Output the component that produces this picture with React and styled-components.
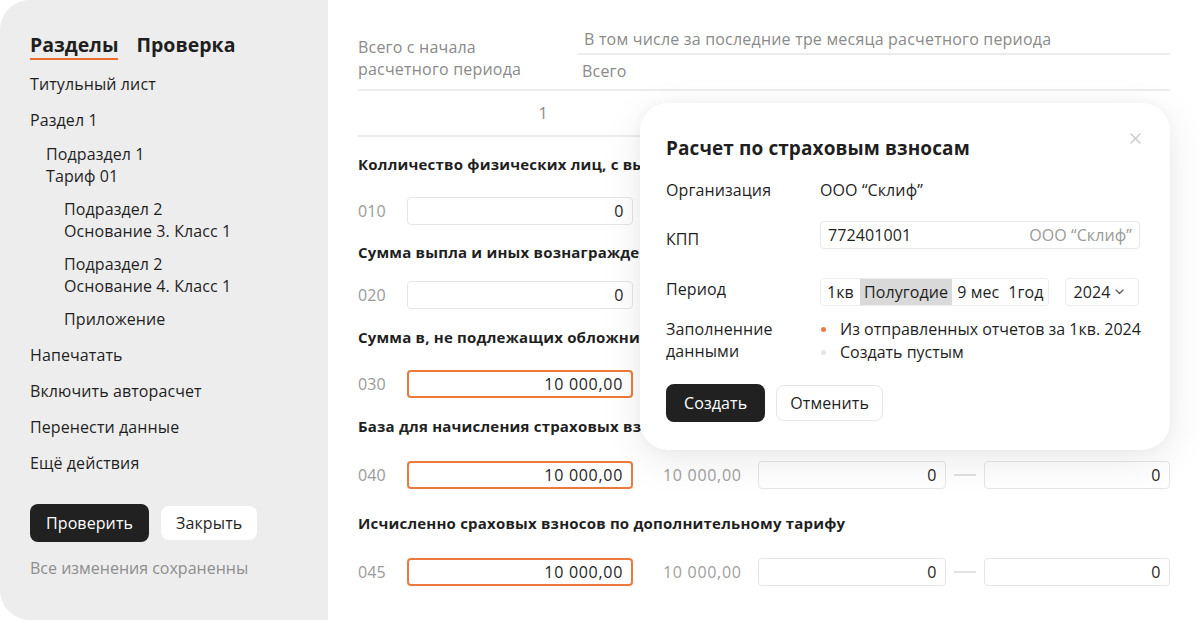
import React from 'react';
import styled, { createGlobalStyle } from 'styled-components';

const GlobalStyle = createGlobalStyle`
  html, body { margin: 0; padding: 0; background: #fff; }
  body {
    font-family: "Open Sans", "Noto Sans", sans-serif;
    color: #1f1f1f;
    letter-spacing: 0.1px;
    -webkit-font-smoothing: antialiased;
  }
  * { box-sizing: border-box; }
`;

const Page = styled.div`
  display: flex;
  width: 1200px;
  height: 620px;
  overflow: hidden;
  background: #fff;
`;

/* ---------- Sidebar ---------- */
const Sidebar = styled.aside`
  width: 328px;
  flex-shrink: 0;
  background: #ededed;
  border-radius: 30px 0 0 30px;
  padding: 33px 30px 0 30px;
  display: flex;
  flex-direction: column;
`;

const Tabs = styled.div`
  display: flex;
  gap: 18px;
`;

const Tab = styled.div`
  font-size: 19.5px;
  font-weight: 700;
  line-height: 24px;
  letter-spacing: 0;
  padding-bottom: 1px;
  border-bottom: 2px solid ${(p) => (p.$active ? '#ee6a2f' : 'transparent')};
  color: #1f1f1f;
`;

const NavList = styled.ul`
  list-style: none;
  margin: 13px 0 0;
  padding: 0;
`;

const indents = [0, 16, 34];
const gaps = [14, 12, 11];

const NavItem = styled.li`
  font-size: 16px;
  line-height: 22px;
  padding-left: ${(p) => indents[p.$level]}px;
  margin-top: ${(p) => (p.$first ? 0 : gaps[p.$level])}px;
  color: #1f1f1f;
`;

const SideActions = styled.div`
  display: flex;
  align-items: center;
  gap: 12px;
  margin-top: 30px;
`;

const DarkButton = styled.button`
  height: 38px;
  padding: 0 ${(p) => p.$px || 16}px;
  border: none;
  border-radius: 8px;
  background: #212121;
  color: #fff;
  font-family: inherit;
  font-size: 16px;
  letter-spacing: 0.1px;
`;

const LightButton = styled.button`
  height: ${(p) => (p.$bordered ? 36 : 34)}px;
  padding: 0 ${(p) => (p.$bordered ? 13 : 15)}px;
  border: ${(p) => (p.$bordered ? '1.5px solid #e6e6e6' : 'none')};
  border-radius: 8px;
  background: #fff;
  color: #1f1f1f;
  font-family: inherit;
  font-size: 16px;
  letter-spacing: 0.1px;
`;

const SavedNote = styled.div`
  margin-top: 15px;
  font-size: 16px;
  line-height: 22px;
  letter-spacing: 0;
  color: #8e8e8e;
`;

/* ---------- Main form ---------- */
const Main = styled.main`
  flex: 1;
  position: relative;
  padding: 28px 30px 0 30px;
`;

const Header = styled.div`
  display: grid;
  grid-template-columns: 220px 1fr;
  border-bottom: 2px solid #ececec;
  font-size: 16px;
  line-height: 22px;
  letter-spacing: 0.2px;
  color: #8a8a8a;
`;

const HeadLead = styled.div`
  padding-top: 8px;
`;

const HeadGroup = styled.div`
  display: flex;
  flex-direction: column;
`;

const HeadCaption = styled.div`
  padding: 0 0 3px 6px;
  border-bottom: 2px solid #ececec;
`;

const HeadSub = styled.div`
  padding: 5px 0 7px 4px;
`;

const NumberRow = styled.div`
  height: 46px;
  border-bottom: 2px solid #ececec;
  display: flex;
`;

const NumberCell = styled.div`
  width: 370px;
  text-align: center;
  line-height: 44px;
  font-size: 16px;
  color: #8a8a8a;
`;

const Section = styled.section`
  margin-top: ${(p) => p.$mt}px;
`;

const SectionTitle = styled.h3`
  margin: 0 0 ${(p) => p.$gap}px;
  font-size: 15px;
  font-weight: 700;
  line-height: 22px;
  letter-spacing: 0.2px;
  white-space: nowrap;
  color: #1f1f1f;
`;

const FieldLine = styled.div`
  display: flex;
  align-items: center;
  height: 28px;
`;

const Code = styled.span`
  width: 49px;
  flex-shrink: 0;
  font-size: 16px;
  color: #9a9a9a;
`;

const NumInput = styled.div`
  width: ${(p) => (p.$w ? `${p.$w}px` : 'auto')};
  flex: ${(p) => (p.$w ? '0 0 auto' : '1')};
  height: 28px;
  border: ${(p) => (p.$accent ? '2px solid #ec7a3c' : '1.5px solid #e6e6e6')};
  border-radius: 4px;
  padding: 0 8px;
  display: flex;
  align-items: center;
  justify-content: flex-end;
  font-size: 16px;
  letter-spacing: 0.7px;
  color: #1f1f1f;
  background: #fff;
`;

const Total = styled.span`
  width: 95px;
  margin-left: 30px;
  flex-shrink: 0;
  font-size: 16px;
  letter-spacing: 0.7px;
  color: #a0a0a0;
`;

const Dash = styled.span`
  width: 22px;
  height: 1.5px;
  margin: 0 8px;
  background: #e2e2e2;
  flex-shrink: 0;
`;

/* ---------- Modal ---------- */
const Modal = styled.div`
  position: absolute;
  left: 312px;
  top: 103px;
  width: 530px;
  padding: 33px 30px 28px 26px;
  background: #fff;
  border-radius: 28px;
  box-shadow: 0 10px 40px rgba(0, 0, 0, 0.09), 0 0 12px rgba(0, 0, 0, 0.03);
`;

const CloseBtn = styled.button`
  position: absolute;
  top: 27px;
  right: 27px;
  width: 16px;
  height: 16px;
  padding: 0;
  border: none;
  background: none;
  display: flex;
  align-items: center;
  justify-content: center;
`;

const ModalTitle = styled.h2`
  margin: 0;
  font-size: 19px;
  font-weight: 700;
  line-height: 24px;
  letter-spacing: 0.1px;
  color: #1f1f1f;
`;

const FormRow = styled.div`
  display: grid;
  grid-template-columns: 154px 1fr;
  align-items: start;
  margin-top: ${(p) => p.$mt}px;
  font-size: 16px;
  line-height: 22px;
`;

const Label = styled.div`
  padding-top: ${(p) => p.$pt || 0}px;
  color: #1f1f1f;
`;

const Value = styled.div`
  color: #1f1f1f;
`;

const TextBox = styled.div`
  width: 320px;
  height: 28px;
  border: 1.5px solid #e8e8e8;
  border-radius: 4px;
  padding: 0 7px;
  display: flex;
  align-items: center;
  justify-content: space-between;
`;

const Hint = styled.span`
  color: #9a9a9a;
`;

const PeriodControls = styled.div`
  display: flex;
  align-items: center;
  gap: 16px;
`;

const Segmented = styled.div`
  display: inline-flex;
  height: 28px;
  border: 1.5px solid #ececec;
  border-radius: 4px;
  overflow: hidden;
`;

const Segment = styled.span`
  display: flex;
  align-items: center;
  padding: 0 ${(p) => p.$px}px;
  background: ${(p) => (p.$active ? '#d9d9d9' : '#fff')};
  color: #1f1f1f;
`;

const YearSelect = styled.div`
  width: 74px;
  height: 28px;
  border: 1.5px solid #ececec;
  border-radius: 4px;
  padding: 0 8px;
  display: flex;
  align-items: center;
  gap: 4px;
`;

const Options = styled.div`
  display: flex;
  flex-direction: column;
`;

const Option = styled.div`
  display: flex;
  align-items: center;
  line-height: 23px;
  white-space: nowrap;
  letter-spacing: 0;
`;

const Dot = styled.span`
  width: 5px;
  height: 5px;
  flex-shrink: 0;
  border-radius: 50%;
  margin: 0 14px 0 1px;
  background: ${(p) => (p.$on ? '#f07a45' : '#e4e4e4')};
`;

const ModalActions = styled.div`
  display: flex;
  align-items: center;
  gap: 11px;
  margin-top: 20px;
`;

const nav = [
  { level: 0, lines: ['Титульный лист'] },
  { level: 0, lines: ['Раздел 1'] },
  { level: 1, lines: ['Подраздел 1', 'Тариф 01'] },
  { level: 2, lines: ['Подраздел 2', 'Основание 3. Класс 1'] },
  { level: 2, lines: ['Подраздел 2', 'Основание 4. Класс 1'] },
  { level: 2, lines: ['Приложение'] },
  { level: 0, lines: ['Напечатать'] },
  { level: 0, lines: ['Включить авторасчет'] },
  { level: 0, lines: ['Перенести данные'] },
  { level: 0, lines: ['Ещё действия'] },
];

const sections = [
  { mt: 16, gap: 22, title: 'Колличество физических лиц, с выплатами которым начислены взносы', code: '010', value: '0', accent: false },
  { mt: 16, gap: 18, title: 'Сумма выпла и иных вознаграждений в пользу физических лиц', code: '020', value: '0', accent: false },
  { mt: 17, gap: 22, title: 'Сумма в, не подлежащих обложнию страховыми взносами', code: '030', value: '10 000,00', accent: true },
  { mt: 17, gap: 24, title: 'База для начисления страховых взносов', code: '040', value: '10 000,00', accent: true },
  { mt: 23, gap: 24, title: 'Исчисленно сраховых взносов по дополнительному тарифу', code: '045', value: '10 000,00', accent: true },
];

const segments = [
  { label: '1кв', px: 6 },
  { label: 'Полугодие', px: 4 },
  { label: '9 мес', px: 5 },
  { label: '1год', px: 4 },
];

export default function App() {
  return (
    <>
      <GlobalStyle />
      <Page>
        <Sidebar>
          <Tabs>
            <Tab $active>Разделы</Tab>
            <Tab>Проверка</Tab>
          </Tabs>
          <NavList>
            {nav.map((item, i) => (
              <NavItem key={i} $level={item.level} $first={i === 0}>
                {item.lines.map((l, j) => (
                  <div key={j}>{l}</div>
                ))}
              </NavItem>
            ))}
          </NavList>
          <SideActions>
            <DarkButton>Проверить</DarkButton>
            <LightButton>Закрыть</LightButton>
          </SideActions>
          <SavedNote>Все изменения сохраненны</SavedNote>
        </Sidebar>

        <Main>
          <Header>
            <HeadLead>
              Всего с начала
              <br />
              расчетного периода
            </HeadLead>
            <HeadGroup>
              <HeadCaption>В том числе за последние тре месяца расчетного периода</HeadCaption>
              <HeadSub>Всего</HeadSub>
            </HeadGroup>
          </Header>
          <NumberRow>
            <NumberCell>1</NumberCell>
          </NumberRow>

          {sections.map((s) => (
            <Section key={s.code} $mt={s.mt}>
              <SectionTitle $gap={s.gap}>{s.title}</SectionTitle>
              <FieldLine>
                <Code>{s.code}</Code>
                <NumInput $w={226} $accent={s.accent}>{s.value}</NumInput>
                <Total>10 000,00</Total>
                <NumInput $w={188}>0</NumInput>
                <Dash />
                <NumInput>0</NumInput>
              </FieldLine>
            </Section>
          ))}

          <Modal>
            <CloseBtn aria-label="Закрыть">
              <svg width="11" height="11" viewBox="0 0 11 11">
                <path d="M1 1L10 10M10 1L1 10" stroke="#c9c9c9" strokeWidth="1.4" strokeLinecap="round" />
              </svg>
            </CloseBtn>
            <ModalTitle>Расчет по страховым взносам</ModalTitle>
            <FormRow $mt={19}>
              <Label>Организация</Label>
              <Value>ООО “Склиф”</Value>
            </FormRow>
            <FormRow $mt={20}>
              <Label $pt={7}>КПП</Label>
              <TextBox>
                <span>772401001</span>
                <Hint>ООО “Склиф”</Hint>
              </TextBox>
            </FormRow>
            <FormRow $mt={28}>
              <Label $pt={0}>Период</Label>
              <PeriodControls>
                <Segmented>
                  {segments.map((s) => (
                    <Segment key={s.label} $px={s.px} $active={s.label === 'Полугодие'}>
                      {s.label}
                    </Segment>
                  ))}
                </Segmented>
                <YearSelect>
                  <span>2024</span>
                  <svg width="9" height="6" viewBox="0 0 9 6">
                    <path d="M1 1L4.5 4.5L8 1" fill="none" stroke="#555" strokeWidth="1.2" strokeLinecap="round" strokeLinejoin="round" />
                  </svg>
                </YearSelect>
              </PeriodControls>
            </FormRow>
            <FormRow $mt={12}>
              <Label>
                Заполненние
                <br />
                данными
              </Label>
              <Options>
                <Option>
                  <Dot $on />
                  Из отправленных отчетов за 1кв. 2024
                </Option>
                <Option>
                  <Dot />
                  Создать пустым
                </Option>
              </Options>
            </FormRow>
            <ModalActions>
              <DarkButton $px={18}>Создать</DarkButton>
              <LightButton $bordered>Отменить</LightButton>
            </ModalActions>
          </Modal>
        </Main>
      </Page>
    </>
  );
}
